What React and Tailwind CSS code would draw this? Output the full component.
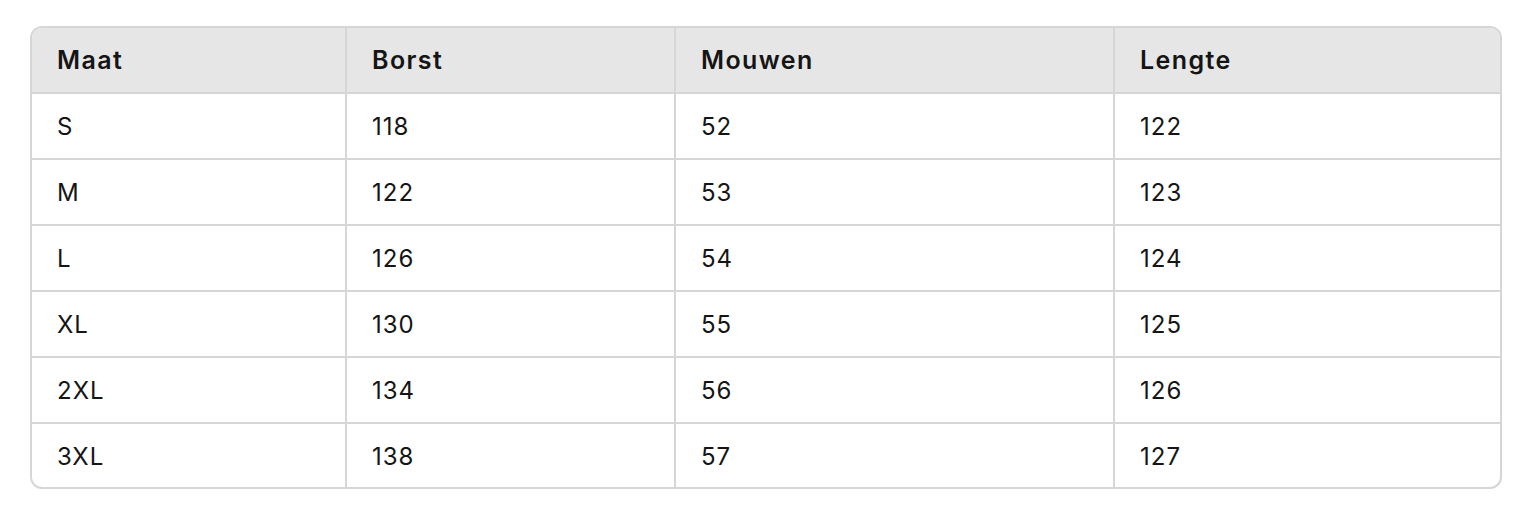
import React from 'react';

const headers = ['Maat', 'Borst', 'Mouwen', 'Lengte'];

const rows = [
  ['S', '118', '52', '122'],
  ['M', '122', '53', '123'],
  ['L', '126', '54', '124'],
  ['XL', '130', '55', '125'],
  ['2XL', '134', '56', '126'],
  ['3XL', '138', '57', '127'],
];

// column widths incl. right border
const widths = ['w-[314px]', 'w-[329px]', 'w-[439px]', 'w-[386px]'];

const SizeTable = () => {
  return (
    <div className="min-h-[524px] bg-white pt-[26px] pl-[30px]" style={{ fontFamily: 'Inter, "Noto Sans", sans-serif' }}>
      <div className="w-[1472px] overflow-hidden rounded-xl border-2 border-[#d6d6d6]">
        <table className="w-full table-fixed border-collapse text-[#151515]">
          <colgroup>
            {widths.map((w, i) => (
              <col key={i} className={w} />
            ))}
          </colgroup>
          <thead className="bg-[#e6e6e6]">
            <tr className="h-[65px] border-b-2 border-[#d6d6d6]">
              {headers.map((h, i) => (
                <th
                  key={h}
                  className={`pt-[2px] pl-[25px] text-left text-[25px] font-semibold tracking-[1.4px] ${i < 3 ? 'border-r-2 border-[#d6d6d6]' : ''}`}
                >
                  {h}
                </th>
              ))}
            </tr>
          </thead>
          <tbody>
            {rows.map((row, r) => (
              <tr
                key={row[0]}
                className={r < rows.length - 1 ? 'h-[66px] border-b-2 border-[#d6d6d6]' : 'h-[64px]'}
              >
                {row.map((cell, i) => (
                  <td
                    key={i}
                    className={`pt-[2px] pl-[25px] text-[24px] font-normal tracking-[1px] ${i < 3 ? 'border-r-2 border-[#d6d6d6]' : ''}`}
                  >
                    {cell}
                  </td>
                ))}
              </tr>
            ))}
          </tbody>
        </table>
      </div>
    </div>
  );
};

export default SizeTable;
